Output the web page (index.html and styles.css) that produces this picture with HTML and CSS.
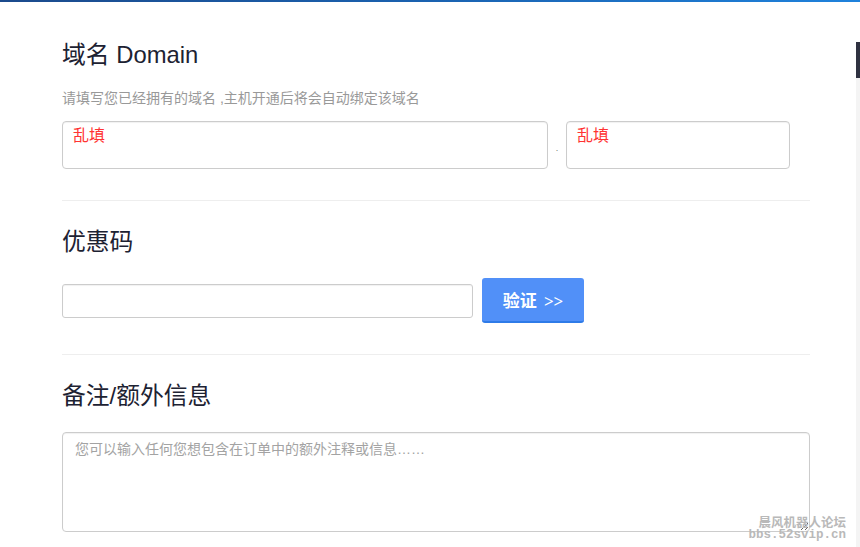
FILE: index.html
```html
<!DOCTYPE html>
<html lang="zh">
<head>
<meta charset="utf-8">
<title>订单信息</title>
<link rel="stylesheet" href="styles.css">
</head>
<body>
<div class="topbar"></div>
<main class="content">
  <section class="block">
    <h2 class="title">域名 Domain</h2>
    <p class="help">请填写您已经拥有的域名 ,主机开通后将会自动绑定该域名</p>
    <div class="domain-row">
      <textarea class="field field-wide" rows="1">乱填</textarea>
      <span class="dot">.</span>
      <textarea class="field field-narrow" rows="1">乱填</textarea>
    </div>
  </section>
  <hr class="divider">
  <section class="block">
    <h2 class="title">优惠码</h2>
    <div class="coupon-row">
      <input class="coupon-input" type="text">
      <button class="btn-verify" type="button">验证 &gt;&gt;</button>
    </div>
  </section>
  <hr class="divider">
  <section class="block">
    <h2 class="title">备注/额外信息</h2>
    <textarea class="notes" placeholder="您可以输入任何您想包含在订单中的额外注释或信息……"></textarea>
  </section>
</main>
<div class="sidebar"><div class="sidebar-thumb"></div></div>
<div class="watermark">
  <div class="wm-cn">晨风机器人论坛</div>
  <div class="wm-url">bbs.52svip.cn</div>
</div>
</body>
</html>
```
FILE: styles.css
```css
html, body {
  margin: 0;
  padding: 0;
  background: #fff;
  height: 100%;
  overflow: hidden;
}
body {
  font-family: "Liberation Sans", "Noto Sans CJK SC", sans-serif;
  color: #333;
  position: relative;
}
.topbar {
  height: 2px;
  background: linear-gradient(90deg, #1b4a8c 0%, #1a62b0 50%, #1f82dc 100%);
}
.content {
  width: 748px;
  padding: 41px 0 0 62px;
}
.title {
  margin: 0;
  font-size: 23.8px;
  line-height: 24px;
  font-weight: 400;
  color: #1d2232;
}
.help {
  margin: 22px 0 0;
  font-size: 14px;
  line-height: 18px;
  color: #999;
}
.domain-row {
  margin-top: 14px;
  display: flex;
  align-items: center;
}
.field {
  box-sizing: border-box;
  height: 48px;
  padding: 4px 10px;
  border: 1px solid #ccc;
  border-radius: 4px;
  box-shadow: inset 0 1px 1px rgba(0,0,0,0.06);
  font-family: "Liberation Sans", "Noto Sans CJK SC", sans-serif;
  font-size: 16px;
  line-height: 20px;
  color: #f33;
  resize: none;
  overflow: hidden;
  background: #fff;
}
.field-wide { width: 486px; }
.field-narrow { width: 224px; }
.dot {
  width: 18px;
  text-align: center;
  font-size: 9px;
  color: #777;
  padding-top: 6px;
}
.divider {
  margin: 31px 0 29px;
  border: 0;
  border-top: 1px solid #eee;
  height: 0;
}
.coupon-row {
  margin-top: 24px;
  display: flex;
  align-items: center;
  gap: 9px;
}
.coupon-input {
  box-sizing: border-box;
  width: 411px;
  height: 34px;
  border: 1px solid #ccc;
  border-radius: 3px;
  box-shadow: inset 0 1px 1px rgba(0,0,0,0.06);
  padding: 6px 10px;
  font-size: 14px;
}
.btn-verify {
  box-sizing: border-box;
  width: 102px;
  height: 45px;
  border: 0;
  border-bottom: 2px solid #2e7be8;
  border-radius: 3px;
  background: #5190f8;
  color: #fff;
  font-family: "Liberation Serif", "Noto Sans CJK SC", serif;
  font-size: 17px;
  font-weight: 600;
  word-spacing: 3px;
  padding: 0;
}
.notes {
  display: block;
  box-sizing: border-box;
  margin-top: 24px;
  width: 748px;
  height: 100px;
  border: 1px solid #ccc;
  border-radius: 4px;
  box-shadow: inset 0 1px 1px rgba(0,0,0,0.06);
  padding: 6px 12px;
  font-family: "Liberation Sans", "Noto Sans CJK SC", sans-serif;
  font-size: 14px;
  line-height: 20px;
  color: #555;
}
.notes::placeholder { color: #a3a3a3; }
.sidebar {
  position: absolute;
  top: 42px;
  right: 0;
  bottom: 0;
  width: 4px;
  background: #f4f4f4;
}
.sidebar-thumb {
  height: 36px;
  background: #2f3241;
}
.watermark {
  position: absolute;
  right: 14px;
  bottom: 5px;
  text-align: right;
  color: #b9b9b9;
  font-weight: 700;
}
.wm-cn {
  font-family: "Noto Sans CJK SC", sans-serif;
  font-size: 12.5px;
  line-height: 15px;
}
.wm-url {
  font-family: "Liberation Mono", monospace;
  font-size: 12.5px;
  line-height: 13px;
}
```
